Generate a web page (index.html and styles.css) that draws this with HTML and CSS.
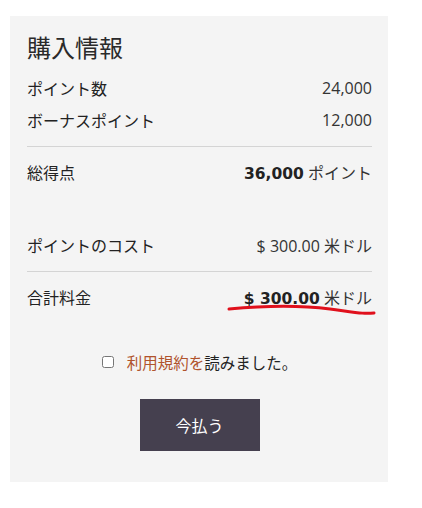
FILE: index.html
```html
<!DOCTYPE html>
<html lang="ja">
<head>
    <meta charset="UTF-8">
    <meta name="viewport" content="width=device-width, initial-scale=1.0">
    <title>購入情報</title>
    <link rel="stylesheet" href="styles.css">
</head>
<body>
    <div class="panel">
        <div class="title">購入情報</div>
        <div class="row">
            <span>ポイント数</span>
            <span class="value">24,000</span>
        </div>
        <div class="row">
            <span>ボーナスポイント</span>
            <span class="value">12,000</span>
        </div>
        <div class="divider"></div>
        <div class="row">
            <span>総得点</span>
            <span class="value strong"><b>36,000</b> ポイント</span>
        </div>
        <div class="row cost-row">
            <span>ポイントのコスト</span>
            <span class="value">$ 300.00 米ドル</span>
        </div>
        <div class="divider"></div>
        <div class="row">
            <span>合計料金</span>
            <span class="value strong"><b>$ 300.00</b> 米ドル</span>
        </div>

        <label class="terms">
            <input type="checkbox" class="terms-check">
            <span><a href="#" class="terms-link">利用規約を</a>読みました。</span>
        </label>

        <div class="actions">
            <button class="pay-button">今払う</button>
        </div>

        <!-- hand-drawn marker under the total -->
        <svg class="marker" width="378" height="466" viewBox="0 0 378 466">
            <path d="M219 293 C 250 290, 290 289, 320 293 S 354 298, 364 297" fill="none" stroke="#e0101c" stroke-width="3" stroke-linecap="round"/>
        </svg>
    </div>
</body>
</html>
```

FILE: styles.css
```css
body {
    margin: 0;
    padding: 0;
    background-color: #ffffff;
    font-family: "Open Sans", "Noto Sans CJK JP", sans-serif;
    color: #222222;
}

.panel {
    position: relative;
    width: 345px;
    height: 434px;
    margin: 16px 0 0 10px;
    padding: 16px 16px 16px 17px;
    background-color: #f4f4f4;
}

.title {
    font-size: 24px;
    line-height: 32px;
    margin-bottom: 8px;
    color: #2a2a2a;
}

.row {
    display: flex;
    justify-content: space-between;
    align-items: center;
    height: 32px;
    font-size: 16px;
}

.value {
    color: #333333;
}

.value b {
    font-family: "DejaVu Sans", "Noto Sans CJK JP", sans-serif;
    font-size: 15.5px;
    font-weight: 700;
    color: #222222;
}

.cost-row {
    margin-top: 41px;
}

.divider {
    height: 1px;
    background-color: #d4d4d4;
    margin: 10px 0 9px 0;
}

.terms {
    display: flex;
    justify-content: center;
    align-items: center;
    gap: 13px;
    margin-top: 37px;
    height: 24px;
    font-size: 15.5px;
    color: #222222;
}

.terms-check {
    width: 12px;
    height: 12px;
    margin: 0;
}

.terms-link {
    color: #b0532c;
    text-decoration: none;
}

.actions {
    display: flex;
    justify-content: center;
    margin-top: 25px;
}

.pay-button {
    width: 120px;
    height: 52px;
    border: none;
    background-color: #45404f;
    color: #ffffff;
    font-family: "Noto Sans CJK JP", sans-serif;
    font-size: 16px;
    cursor: pointer;
}

.marker {
    position: absolute;
    top: 0;
    left: 0;
    pointer-events: none;
}
```
